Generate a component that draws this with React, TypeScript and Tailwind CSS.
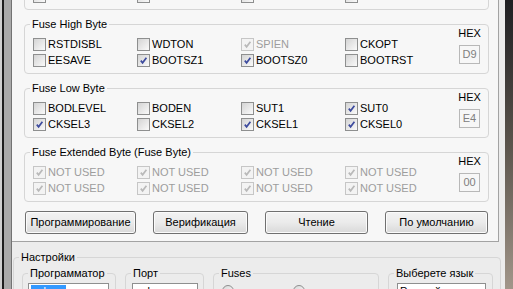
import React from "react";

type Item = { label: string; checked?: boolean; disabled?: boolean };

function CheckBox({ checked, disabled }: { checked?: boolean; disabled?: boolean }) {
  return (
    <span
      className={`flex h-[13px] w-[13px] shrink-0 items-center justify-center border ${
        disabled
          ? "border-[#c6c6c6] bg-[#f3f3f3]"
          : "border-[#8e8f8f] bg-linear-to-br from-[#d4d4d4] to-[#fafafa]"
      }`}
    >
      {checked && (
        <svg width="9" height="9" viewBox="0 0 9 9">
          <path
            d="M1.8 4.6 L3.6 6.8 L7.4 1.8"
            fill="none"
            stroke={disabled ? "#b9b9b9" : "#3d4b9e"}
            strokeWidth="1.7"
          />
        </svg>
      )}
    </span>
  );
}

function FuseGroup({ title, items, hex, className = "" }: { title?: string; items: Item[]; hex?: string; className?: string }) {
  return (
    <div className={`relative h-[50px] w-[465px] shrink-0 rounded-[4px] border border-[#d6d6d6] ${className}`}>
      {title && <span className="absolute -top-[7px] left-[5px] bg-[#f7f7f7] px-[2px] leading-[13px]">{title}</span>}
      <div className="flex">
        <div className="mt-[11px] grid grid-cols-[104px_104px_104px_104px] pl-[8px]">
          {items.map((it, i) => (
            <label key={i} className="flex h-[16px] items-center gap-[2px]">
              <CheckBox checked={it.checked} disabled={it.disabled} />
              {it.label && (
                <span className={`leading-[13px] ${it.disabled ? "text-[#9d9d9d]" : "text-black"}`}>{it.label}</span>
              )}
            </label>
          ))}
        </div>
        <div className="ml-auto mr-[7px] mt-[2px] flex w-[23px] flex-col items-center">
          <span className="h-[13px] leading-[13px]">{hex ? "HEX" : ""}</span>
          <span className="mt-[5px] flex h-[19px] w-[21px] items-center justify-center border border-[#b8b8b8] bg-[#f7f7f7] leading-[13px] text-[#808080]">
            {hex}
          </span>
        </div>
      </div>
    </div>
  );
}

function Button({ label, w }: { label: string; w: string }) {
  return (
    <button
      className={`h-[23px] ${w} rounded-[3px] border border-[#707070] bg-linear-to-b from-[#f3f3f3] via-[#ebebeb] to-[#d9d9d9] leading-[13px] text-black shadow-[inset_0_0_0_1px_#fbfbfb]`}
    >
      {label}
    </button>
  );
}

function SubGroup({ title, w, children }: { title: string; w: string; children?: React.ReactNode }) {
  return (
    <div className={`relative h-[40px] ${w} shrink-0 rounded-[4px] border border-[#d6d6d6]`}>
      <span className="absolute -top-[7px] left-[5px] bg-[#ececec] px-[2px] leading-[13px]">{title}</span>
      {children}
    </div>
  );
}

// group scrolled above the top edge: only the bottoms of its boxes show
const hidden: Item[] = Array.from({ length: 8 }, () => ({ label: "" }));

const high: Item[] = [
  { label: "RSTDISBL" },
  { label: "WDTON" },
  { label: "SPIEN", checked: true, disabled: true },
  { label: "CKOPT" },
  { label: "EESAVE" },
  { label: "BOOTSZ1", checked: true },
  { label: "BOOTSZ0", checked: true },
  { label: "BOOTRST" },
];

const low: Item[] = [
  { label: "BODLEVEL" },
  { label: "BODEN" },
  { label: "SUT1" },
  { label: "SUT0", checked: true },
  { label: "CKSEL3", checked: true },
  { label: "CKSEL2" },
  { label: "CKSEL1", checked: true },
  { label: "CKSEL0", checked: true },
];

const ext: Item[] = Array.from({ length: 8 }, () => ({ label: "NOT USED", checked: true, disabled: true }));

function Radio() {
  return <span className="block h-[12px] w-[12px] rounded-full border border-[#8e8f8f] bg-linear-to-br from-[#d8d8d8] to-[#fafafa]" />;
}

export default function App() {
  return (
    <div className="flex h-[289px] w-[513px] overflow-hidden font-['Liberation_Sans',Arial,sans-serif] text-[11px] text-black">
      {/* window frame on the left */}
      <div className="flex w-[12px] shrink-0">
        <div className="w-[2px] bg-[#cfcfcf]" />
        <div className="w-[2px] bg-[#1d1d1d]" />
        <div className="w-[7px] bg-[#a9a9a9]" />
        <div className="w-[1px] bg-[#737373]" />
      </div>

      <div className="flex w-[493px] shrink-0 flex-col bg-[#ececec]">
        <div className="flex h-[242px] w-[487px] shrink-0 flex-col overflow-hidden border-b border-r border-[#a3a3a3] bg-[#f7f7f7] pl-[12px]">
          <FuseGroup items={hidden} className="-mt-[40px]" />
          <FuseGroup title="Fuse High Byte" items={high} hex="D9" className="mt-[14px]" />
          <FuseGroup title="Fuse Low Byte" items={low} hex="E4" className="mt-[14px]" />
          <FuseGroup title="Fuse Extended Byte (Fuse Byte)" items={ext} hex="00" className="mt-[14px]" />
          <div className="ml-[1px] mt-[9px] flex gap-[17px]">
            <Button label="Программирование" w="w-[111px]" />
            <Button label="Верификация" w="w-[95px]" />
            <Button label="Чтение" w="w-[103px]" />
            <Button label="По умолчанию" w="w-[103px]" />
          </div>
        </div>

        <div className="relative ml-[1px] mt-[15px] h-[60px] w-[488px] shrink-0 rounded-[4px] border border-[#d6d6d6]">
          <span className="absolute -top-[7px] left-[5px] bg-[#ececec] px-[2px] leading-[13px]">Настройки</span>
          <div className="mt-[15px] flex gap-[9px] pl-[8px]">
            <SubGroup title="Программатор" w="w-[94px]">
              <div className="ml-[5px] mt-[9px] h-[22px] w-[81px] border border-[#8e8f8f] bg-white pl-[2px] pt-[1px]">
                <span className="block w-[35px] bg-[#3399ff] pl-[1px] leading-[13px] text-white">usbasp</span>
              </div>
            </SubGroup>
            <SubGroup title="Порт" w="w-[79px]">
              <div className="ml-[6px] mt-[9px] h-[22px] w-[66px] border border-[#8e8f8f] bg-white pl-[3px] pt-[1px] leading-[13px]">
                usb
              </div>
            </SubGroup>
            <SubGroup title="Fuses" w="w-[166px]">
              <div className="ml-[8px] mt-[11px] flex gap-[59px]">
                <Radio />
                <Radio />
              </div>
            </SubGroup>
            <SubGroup title="Выберете язык" w="w-[105px]">
              <div className="ml-[8px] mt-[9px] h-[22px] w-[89px] border border-[#8e8f8f] bg-white pl-[2px] pt-[1px] leading-[13px]">
                Русский
              </div>
            </SubGroup>
          </div>
        </div>
      </div>

      {/* desktop edge on the right */}
      <div className="w-[8px] shrink-0 bg-linear-to-b from-[#1f1f22] via-[#5b544c] to-[#a2968a]" />
    </div>
  );
}
